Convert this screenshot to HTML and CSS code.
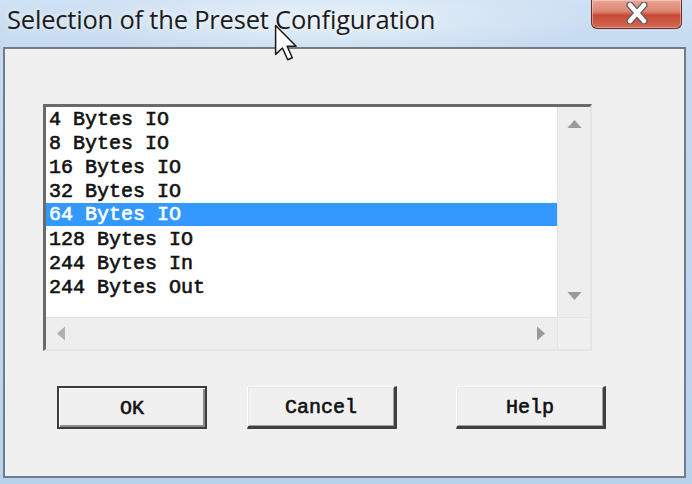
FILE: index.html
```html
<!DOCTYPE html>
<html>
<head>
<meta charset="utf-8">
<link rel="stylesheet" href="styles.css">
</head>
<body>
<div class="window">
  <div class="titlebar">
    <span class="title">Selection of the Preset Configuration</span>
    <div class="close">
      <svg width="30" height="22" viewBox="0 0 30 22">
        <path d="M8 3 L22 19 M22 3 L8 19" stroke="#5a5a5a" stroke-width="7" stroke-linecap="round"/>
        <path d="M8 3 L22 19 M22 3 L8 19" stroke="#ffffff" stroke-width="4.5" stroke-linecap="round"/>
      </svg>
    </div>
  </div>
  <div class="client">
    <div class="listbox">
      <ul class="items">
        <li>4 Bytes IO</li>
        <li>8 Bytes IO</li>
        <li>16 Bytes IO</li>
        <li>32 Bytes IO</li>
        <li class="selected">64 Bytes IO</li>
        <li>128 Bytes IO</li>
        <li>244 Bytes In</li>
        <li>244 Bytes Out</li>
      </ul>
      <div class="vscroll">
        <svg width="16" height="9" viewBox="0 0 16 9"><path d="M0 9 L8 0 L16 9 Z" fill="#9a9a9a"/></svg>
        <svg width="16" height="9" viewBox="0 0 16 9"><path d="M0 0 L16 0 L8 9 Z" fill="#9a9a9a"/></svg>
      </div>
      <div class="hscroll">
        <svg width="9" height="16" viewBox="0 0 9 16"><path d="M9 0 L9 16 L0 8 Z" fill="#b0b0b0"/></svg>
        <svg width="9" height="16" viewBox="0 0 9 16"><path d="M0 0 L9 8 L0 16 Z" fill="#9a9a9a"/></svg>
      </div>
      <div class="corner"></div>
    </div>
    <div class="buttons">
      <div class="btn default ok">OK</div>
      <div class="btn cancel">Cancel</div>
      <div class="btn help">Help</div>
    </div>
  </div>
  <svg class="cursor" width="26" height="38" viewBox="0 0 17 25">
    <path d="M1 1 L1 20 L5.5 15.8 L9 23.5 L12 22.2 L8.6 14.6 L14.5 14.6 Z" fill="#ffffff" stroke="#1a1a1a" stroke-width="1" stroke-linejoin="round"/>
  </svg>
</div>
</body>
</html>
```
FILE: styles.css
```css
html, body {
  margin: 0;
  padding: 0;
}
body {
  width: 692px;
  height: 484px;
  overflow: hidden;
  background: #b8d0ea;
}
.window {
  position: relative;
  width: 692px;
  height: 484px;
  display: flex;
  flex-direction: column;
  background:
    radial-gradient(ellipse 260px 40px at 330px 20px, rgba(255,255,255,0.55), rgba(255,255,255,0)),
    linear-gradient(180deg, #cfe1f4 0px, #c6dbf0 47px, #b9d2ec 100%);
}
.titlebar {
  height: 47px;
  display: flex;
  align-items: flex-start;
  flex: none;
}
.title {
  font-family: "Open Sans", "Noto Sans", sans-serif;
  font-size: 25.5px;
  line-height: 26px;
  color: #1c1c1c;
  padding: 6px 0 0 7px;
  letter-spacing: -0.2px;
  text-shadow: 0 0 6px rgba(255,255,255,0.9);
}
.close {
  margin-left: auto;
  margin-right: 10px;
  width: 89px;
  height: 28px;
  border: 1px solid #6e2a22;
  border-top: none;
  border-radius: 0 0 6px 6px;
  background: linear-gradient(180deg, #e9a696 0%, #dc8672 40%, #c64a36 55%, #d36a55 100%);
  box-shadow: inset 0 0 0 1px rgba(255,255,255,0.35);
  display: flex;
  align-items: center;
  justify-content: center;
}
.close svg {
  margin-top: -2px;
}
.client {
  margin: 0 6px 6px 3px;
  flex: 1;
  border: 2px solid #6f7c8a;
  background: #f0f0f0;
  display: flex;
  flex-direction: column;
}
.listbox {
  margin: 55px 0 0 38px;
  width: 544px;
  height: 242px;
  border-style: solid;
  border-width: 3px 2px 2px 3px;
  border-color: #6a6a6a #e4e4e4 #e4e4e4 #6a6a6a;
  display: grid;
  grid-template-columns: 511px 33px;
  grid-template-rows: 210px 32px;
}
.items {
  list-style: none;
  margin: 0;
  padding: 0;
  background: #ffffff;
  font-family: "Liberation Mono", monospace;
  font-weight: normal;
  -webkit-text-stroke: 0.6px currentColor;
  font-size: 20px;
  color: #111;
}
.items li {
  height: 24px;
  line-height: 26px;
  padding-left: 3px;
  white-space: pre;
}
.items li.selected {
  background: #3399ff;
  color: #ffffff;
  height: 23px;
  line-height: 24px;
  margin-bottom: 1px;
}
.vscroll {
  background: #eeeeee;
  border-left: 1px solid #e2e2e2;
  display: flex;
  flex-direction: column;
  align-items: center;
  justify-content: space-between;
  padding: 13px 0 17px;
}
.vscroll svg {
  width: 15px;
  height: 8px;
}
.hscroll {
  background: #eeeeee;
  border-top: 1px solid #e2e2e2;
  display: flex;
  align-items: center;
  justify-content: space-between;
  padding: 0 12px 0 11px;
}
.hscroll svg {
  width: 8px;
  height: 15px;
}
.corner {
  background: #f0f0f0;
  border-left: 1px solid #e4e4e4;
  border-top: 1px solid #e4e4e4;
}
.buttons {
  display: flex;
  margin-top: 35px;
  padding-left: 52px;
}
.btn {
  box-sizing: border-box;
  width: 150px;
  height: 43px;
  background: #f0f0f0;
  border-style: solid;
  border-width: 1px 3px 3px 1px;
  border-color: #ffffff #404040 #404040 #ffffff;
  box-shadow: inset 1px 1px #e6e6e6, inset -1px -1px #a0a0a0;
  font-family: "Liberation Mono", monospace;
  font-weight: normal;
  -webkit-text-stroke: 0.6px currentColor;
  font-size: 20px;
  padding-top: 2px;
  color: #111;
  display: flex;
  align-items: center;
  justify-content: center;
}
.btn.default {
  border: 2px solid #3c3c3c;
  box-shadow: inset 1px 1px #ffffff, inset -2px -2px #8a8a8a;
}
.cancel {
  margin-left: 40px;
}
.help {
  margin-left: 59px;
}
.cursor {
  position: absolute;
  left: 274px;
  top: 24px;
}
```
